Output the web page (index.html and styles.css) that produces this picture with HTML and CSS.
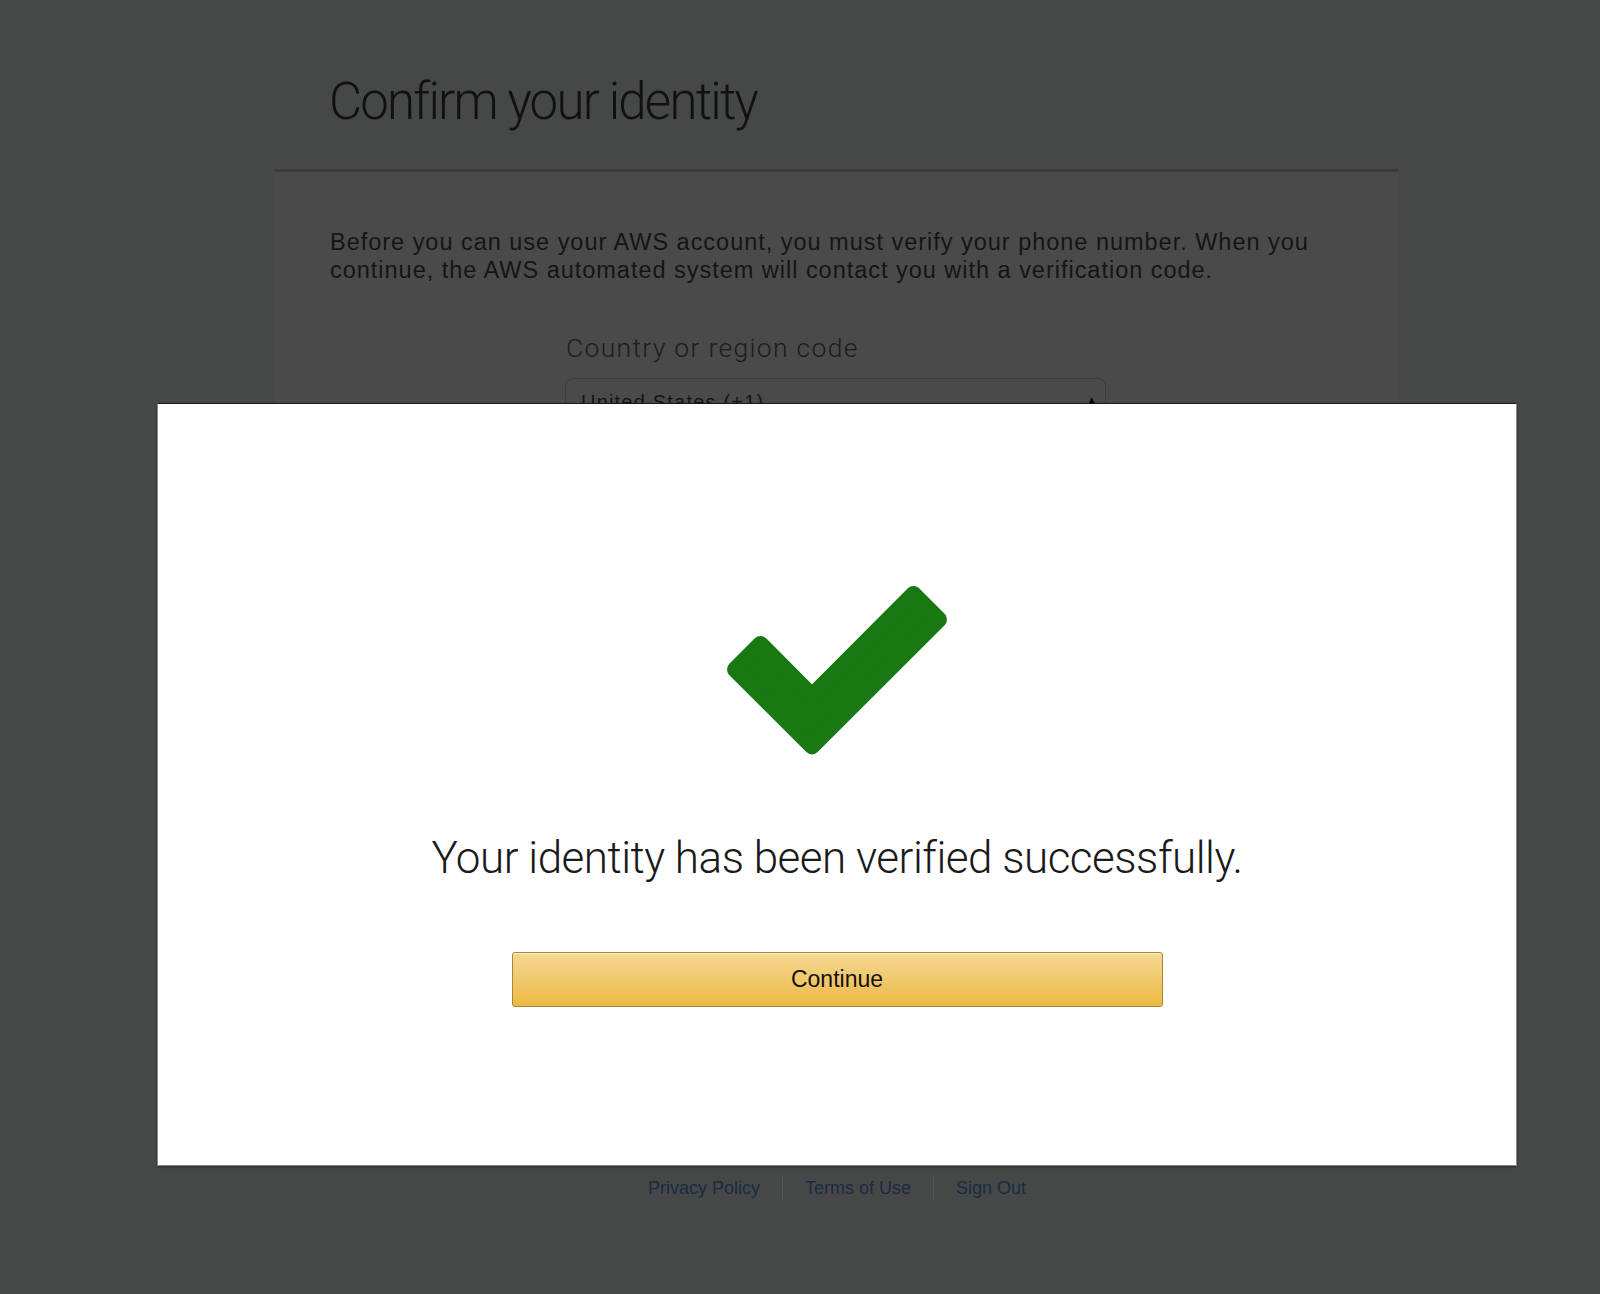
FILE: index.html
```html
<!DOCTYPE html>
<html lang="en">
<head>
<meta charset="utf-8">
<title>Confirm your identity</title>
<link rel="stylesheet" href="styles.css">
</head>
<body>
  <div class="page">
    <header class="page-header">
      <h1 class="page-title">Confirm your identity</h1>
    </header>
    <section class="card">
      <p class="intro">Before you can use your AWS account, you must verify your phone number. When you continue, the AWS automated system will contact you with a verification code.</p>
      <div class="form">
        <label class="field-label">Country or region code</label>
        <div class="select">
          <span class="select-value">United States (+1)</span>
          <span class="select-arrows">&#9650;</span>
        </div>
      </div>
    </section>
    <footer class="footer">
      <a class="footer-link" href="#">Privacy Policy</a>
      <a class="footer-link" href="#">Terms of Use</a>
      <a class="footer-link" href="#">Sign Out</a>
    </footer>
  </div>

  <div class="modal">
    <svg class="check" width="240" height="190" viewBox="0 0 240 190" aria-hidden="true">
      <polygon points="43.49,68.03 18.03,93.49 95,170.46 221.97,43.49 196.51,18.03 95,119.54" fill="#1a7813" stroke="#1a7813" stroke-width="16" stroke-linejoin="round"/>
    </svg>
    <h2 class="modal-title">Your identity has been verified successfully.</h2>
    <button class="btn-continue" type="button">Continue</button>
  </div>
</body>
</html>
```
FILE: styles.css
```css
html, body {
  margin: 0;
  padding: 0;
}

body {
  background: #464847;
  font-family: "Liberation Sans", Arial, sans-serif;
  min-height: 1294px;
  color: #151515;
}

.page {
  width: 1124px;
  margin-left: 275px;
}

.page-header {
  padding: 76px 0 41px 54px;
}

.page-title {
  margin: 0;
  font-family: Roboto, "Liberation Sans", sans-serif;
  font-weight: 300;
  font-size: 51px;
  line-height: 52px;
  color: #111;
  letter-spacing: -1.8px;
}

.card {
  box-sizing: border-box;
  height: 961px;
  background: #4a4a4a;
  border-top: 3px solid #3b3b3b;
  padding: 56px 58px 0 55px;
}

.intro {
  margin: 0;
  font-size: 23.5px;
  line-height: 28px;
  color: #151515;
  letter-spacing: 0.98px;
}

.form {
  width: 541px;
  margin: 48px auto 0;
}

.field-label {
  display: block;
  font-family: Roboto, "Liberation Sans", sans-serif;
  font-weight: 300;
  font-size: 26.5px;
  line-height: 32px;
  color: #1c1c1c;
  margin-left: 1px;
  letter-spacing: 1.3px;
}

.select {
  box-sizing: border-box;
  margin-top: 14px;
  height: 44px;
  border: 1px solid #3a3d3c;
  border-radius: 8px;
  display: flex;
  align-items: flex-start;
  justify-content: space-between;
  padding: 13px 7px 0 15px;
}

.select-value {
  font-size: 20px;
  line-height: 20px;
  color: #151515;
  letter-spacing: 1.2px;
}

.select-arrows {
  font-size: 13px;
  line-height: 13px;
  margin-top: 2px;
  color: #000;
}

.footer {
  display: flex;
  justify-content: center;
  margin-top: 46px;
}

.footer-link {
  font-size: 18px;
  line-height: 24px;
  color: #1b2a44;
  text-decoration: none;
  padding: 0 22px;
  border-left: 1px solid #525453;
}

.footer-link:first-child {
  border-left: none;
}

.modal {
  position: absolute;
  left: 157px;
  top: 403px;
  box-sizing: border-box;
  width: 1360px;
  height: 763px;
  background: #fff;
  border: 1px solid #8b8b8b;
  border-top-color: #1a1a1a;
  box-shadow: 0 1px 2px rgba(0, 0, 0, 0.45);
  display: flex;
  flex-direction: column;
  align-items: center;
  padding-top: 172px;
}

.check {
  display: block;
}

.modal-title {
  margin: 66px 0 0;
  font-family: Roboto, "Liberation Sans", sans-serif;
  font-weight: 300;
  font-size: 44px;
  line-height: 52px;
  color: #1a1a1a;
  letter-spacing: -0.5px;
}

.btn-continue {
  box-sizing: border-box;
  margin-top: 68px;
  width: 651px;
  height: 55px;
  border: 1px solid #a88734;
  border-radius: 3px;
  background: linear-gradient(#f6d894, #ecb943);
  box-shadow: inset 0 1px 0 rgba(255, 255, 255, 0.5);
  font-family: "Liberation Sans", Arial, sans-serif;
  font-size: 23px;
  color: #111;
  cursor: pointer;
}
```
